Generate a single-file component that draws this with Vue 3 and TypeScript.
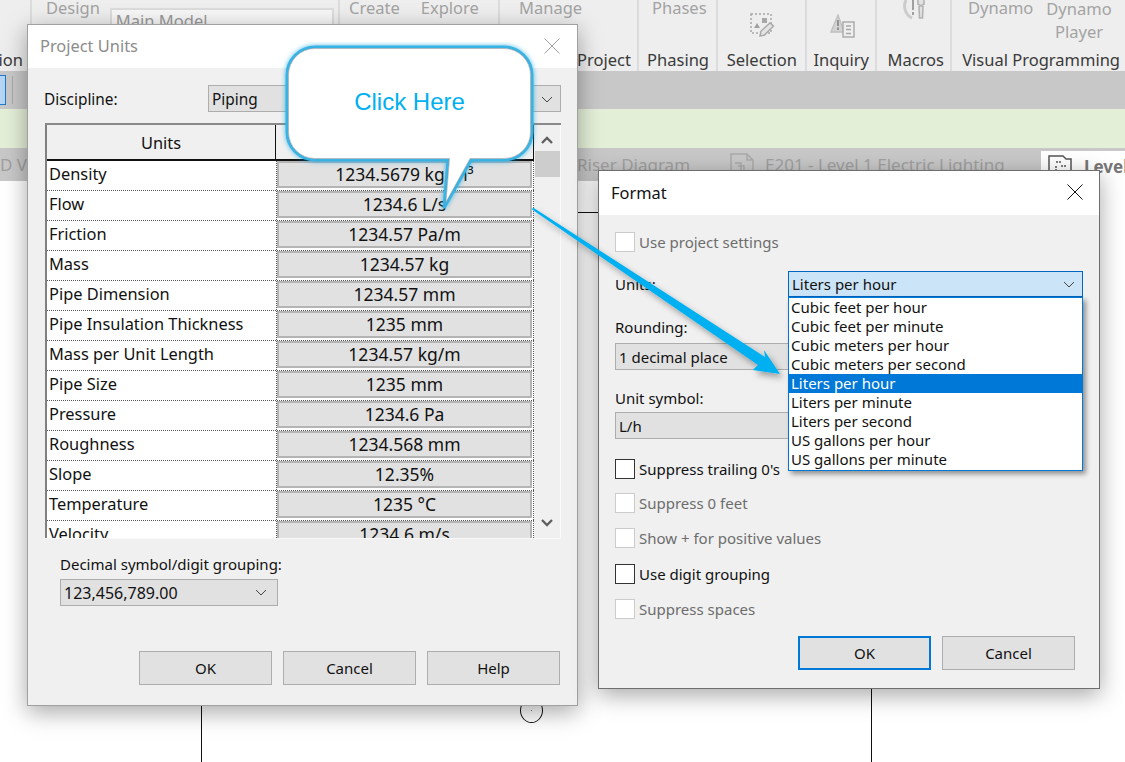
<script setup lang="ts">
interface UnitRow {
  name: string;
  value: string;
}

const unitRows: UnitRow[] = [
  { name: 'Density', value: '1234.5679 kg/m³' },
  { name: 'Flow', value: '1234.6 L/s' },
  { name: 'Friction', value: '1234.57 Pa/m' },
  { name: 'Mass', value: '1234.57 kg' },
  { name: 'Pipe Dimension', value: '1234.57 mm' },
  { name: 'Pipe Insulation Thickness', value: '1235 mm' },
  { name: 'Mass per Unit Length', value: '1234.57 kg/m' },
  { name: 'Pipe Size', value: '1235 mm' },
  { name: 'Pressure', value: '1234.6 Pa' },
  { name: 'Roughness', value: '1234.568 mm' },
  { name: 'Slope', value: '12.35%' },
  { name: 'Temperature', value: '1235 °C' },
  { name: 'Velocity', value: '1234.6 m/s' },
];

const flowUnits: string[] = [
  'Cubic feet per hour',
  'Cubic feet per minute',
  'Cubic meters per hour',
  'Cubic meters per second',
  'Liters per hour',
  'Liters per minute',
  'Liters per second',
  'US gallons per hour',
  'US gallons per minute',
];
const selectedUnit = 'Liters per hour';
</script>

<template>
  <div class="app">
    <!-- Revit ribbon behind the dialogs -->
    <div class="ribbon">
      <div class="group g0"><span class="group-label">ion</span></div>
      <div class="group g1">
        <div class="top-row">
          <span class="muted design">Design</span>
          <span class="model-select">Main Model</span>
        </div>
      </div>
      <div class="group g2">
        <div class="top-row">
          <span class="muted create">Create</span>
          <span class="muted explore">Explore</span>
        </div>
      </div>
      <div class="group g3">
        <div class="top-row"><span class="muted manage">Manage</span></div>
        <span class="group-label">Project</span>
      </div>
      <div class="group g4">
        <div class="top-row"><span class="muted">Phases</span></div>
        <span class="group-label">Phasing</span>
      </div>
      <div class="group g5">
        <svg class="ribbon-icon sel" viewBox="0 0 26 26" fill="none" stroke="#a8a8a8">
          <rect x="1" y="1" width="20" height="19" stroke-width="1.5" stroke-dasharray="2 2" />
          <path d="M4 15l3-5 3 5z" fill="#a0a0a0" stroke="none" />
          <rect x="12" y="5" width="5" height="5" fill="#a8a8a8" stroke="none" />
          <path d="M10 23l1-5 9-8 3.5 3-9 9z" fill="#e4e4e4" stroke-width="1.4" />
        </svg>
        <span class="group-label">Selection</span>
      </div>
      <div class="group g6">
        <svg class="ribbon-icon inq" viewBox="0 0 26 26" fill="none" stroke="#a8a8a8" stroke-width="1.4">
          <path d="M8 1L1 18h13z" fill="#d4d4d4" stroke="#c0c0c0" />
          <path d="M8 6v6M8 13.5v2.5" stroke="#8c8c8c" stroke-width="1.8" />
          <rect x="13" y="8" width="11" height="15" fill="#eeeeee" />
          <path d="M16 12h5M16 15.5h5M16 19.5h5" />
        </svg>
        <span class="group-label">Inquiry</span>
      </div>
      <div class="group g7">
        <svg class="ribbon-icon mac" viewBox="0 0 24 20" fill="none" stroke="#b4b4b4" stroke-width="1.6">
          <path d="M3 0C0 6 2 15 9 18" stroke="#cccccc" stroke-width="3" />
          <path d="M15 0v4l3 2 3-2V0M16 6l.5 12h3l.5-12" fill="#e2e2e2" />
          <path d="M10 0v10M10 12v3" stroke="#a0a0a0" stroke-width="2" />
        </svg>
        <span class="group-label">Macros</span>
      </div>
      <div class="group g8">
        <div class="top-row dynamo">
          <span class="muted">Dynamo</span>
          <span class="player muted">Dynamo<br />Player</span>
        </div>
        <span class="group-label">Visual Programming</span>
      </div>
    </div>

    <div class="toolbar">
      <span class="tool-active"></span>
      <span class="tool-sep"></span>
    </div>
    <div class="status-band"></div>

    <div class="tabs">
      <span class="tab-left">D V</span>
      <span class="tab-riser">Riser Diagram</span>
      <svg class="tab-icon" viewBox="0 0 24 24" fill="none" stroke="#aaaaaa" stroke-width="1.5">
        <path d="M1 23V1h16l6 6v16zM17 1v6h6" />
        <path d="M5 10h6v8h8M8 13h6v5" />
      </svg>
      <span class="tab-sheet">E201 - Level 1 Electric Lighting</span>
      <div class="tab-active">
        <svg class="tab-icon dark" viewBox="0 0 24 24" fill="none" stroke="#555555" stroke-width="1.5">
          <path d="M1 23V2h14l3 3h5v18z" />
          <path d="M8 8h5M8 12v6M13 12h5" stroke-dasharray="2 1" />
        </svg>
        <span class="tab-level">Level</span>
      </div>
    </div>

    <!-- drawing canvas: items sit at their own place on the sheet -->
    <span class="sheet-line line-a"></span>
    <span class="sheet-line line-b"></span>
    <span class="sheet-line line-c"></span>
    <span class="sheet-circle"><i class="sheet-dot"></i></span>

    <!-- Project Units dialog -->
    <section class="dialog units-dialog">
      <header class="title-bar">
        <span class="title muted-title">Project Units</span>
        <svg class="close" viewBox="0 0 16 16" stroke="#a0a0a0" fill="none"><path d="M.5.5l15 15M15.5.5l-15 15" /></svg>
      </header>
      <div class="units-body">
        <div class="discipline">
          <label class="discipline-label">Discipline:</label>
          <div class="select discipline-select">
            <span>Piping</span>
            <svg class="chevron" viewBox="0 0 12 7" fill="none" stroke="#444"><path d="M1 1l5 5 5-5" /></svg>
          </div>
        </div>

        <div class="table-wrap">
          <div class="table">
            <div class="thead">
              <div class="th th-units">Units</div>
              <div class="th th-format">Format</div>
            </div>
            <div v-for="row in unitRows" :key="row.name" class="tr">
              <div class="td-name">{{ row.name }}</div>
              <div class="td-value"><span class="value-box">{{ row.value }}</span></div>
            </div>
          </div>
          <div class="scrollbar">
            <svg class="scroll-arrow" viewBox="0 0 12 8" fill="none" stroke="#606060" stroke-width="2.4"><path d="M1 7l5-5 5 5" /></svg>
            <span class="scroll-thumb"></span>
            <svg class="scroll-arrow down" viewBox="0 0 12 8" fill="none" stroke="#606060" stroke-width="2.4"><path d="M1 1l5 5 5-5" /></svg>
          </div>
        </div>

        <div class="decimal">
          <label>Decimal symbol/digit grouping:</label>
          <div class="select decimal-select">
            <span>123,456,789.00</span>
            <svg class="chevron" viewBox="0 0 12 7" fill="none" stroke="#444"><path d="M1 1l5 5 5-5" /></svg>
          </div>
        </div>

        <div class="button-row">
          <button class="btn">OK</button>
          <button class="btn">Cancel</button>
          <button class="btn">Help</button>
        </div>
      </div>
    </section>

    <!-- Format dialog -->
    <section class="dialog format-dialog">
      <header class="title-bar format-title-bar">
        <span class="title">Format</span>
        <svg class="close" viewBox="0 0 16 16" stroke="#111" fill="none"><path d="M.5.5l15 15M15.5.5l-15 15" /></svg>
      </header>
      <div class="format-body">
        <div class="check off first"><span class="box"></span>Use project settings</div>

        <div class="units-row">
          <label>Units:</label>
          <div class="unit-combo">
            <span>Liters per hour</span>
            <svg class="chevron" viewBox="0 0 12 7" fill="none" stroke="#444"><path d="M1 1l5 5 5-5" /></svg>
            <ul class="unit-list">
              <li v-for="unit in flowUnits" :key="unit" :class="{ picked: unit === selectedUnit }">{{ unit }}</li>
            </ul>
          </div>
        </div>

        <label class="field-label rounding">Rounding:</label>
        <div class="select wide">1 decimal place</div>

        <label class="field-label symbol">Unit symbol:</label>
        <div class="select wide">L/h</div>

        <div class="check trailing"><span class="box"></span>Suppress trailing 0's</div>
        <div class="check off feet"><span class="box"></span>Suppress 0 feet</div>
        <div class="check off plus"><span class="box"></span>Show + for positive values</div>
        <div class="check grouping"><span class="box"></span>Use digit grouping</div>
        <div class="check off spaces"><span class="box"></span>Suppress spaces</div>

        <div class="button-row format-buttons">
          <button class="btn default">OK</button>
          <button class="btn">Cancel</button>
        </div>
      </div>
    </section>

    <!-- annotation drawn on top of the screenshot -->
    <svg class="arrow" viewBox="0 0 270 190" width="270" height="190">
      <defs>
        <filter id="arrow-shadow" x="-10%" y="-10%" width="125%" height="125%">
          <feDropShadow dx="3" dy="4" stdDeviation="3" flood-color="#000" flood-opacity="0.35" />
        </filter>
      </defs>
      <path
        d="M0 1.5 L232 151 L231 144 L247 168 L219.7 164 L225 159 L-1 3.5 Z"
        fill="#00b0f0"
        filter="url(#arrow-shadow)"
      />
    </svg>

    <div class="callout">
      <svg class="callout-shape" viewBox="0 0 260 176" width="260" height="176">
        <defs>
          <filter id="callout-glow" x="-10%" y="-10%" width="120%" height="120%">
            <feDropShadow dx="0" dy="0" stdDeviation="2.5" flood-color="#00a0e0" flood-opacity="0.7" />
          </filter>
        </defs>
        <path
          d="M35 5H224a28 28 0 0 1 28 28V90a28 28 0 0 1-28 28H191L164 166L168 118H35a28 28 0 0 1-28-28V33a28 28 0 0 1 28-28Z"
          fill="#fff"
          stroke="#38b3e3"
          stroke-width="3"
          filter="url(#callout-glow)"
        />
        <path
          d="M35 6.500H224a26.500 26.500 0 0 1 26.500 26.500V90a26.500 26.500 0 0 1-26.500 26.500H190L166 160L169.500 116.500H35a26.500 26.500 0 0 1-26.500-26.500V33a26.500 26.500 0 0 1 26.500-26.500Z"
          fill="#fff"
          stroke="#9a9a9a"
          stroke-width="0.6"
        />
      </svg>
      <span class="callout-text">Click Here</span>
    </div>
  </div>
</template>

<style>
html,
body {
  margin: 0;
  background: #fff;
}
</style>

<style scoped>
.app {
  position: relative;
  width: 1125px;
  height: 762px;
  overflow: hidden;
  background: #fff;
  font-family: "Noto Sans", "Open Sans", sans-serif;
  font-size: 15px;
  color: #111;
}

.ribbon {
  display: flex;
  height: 71px;
  background: #eeeeee;
  font-size: 16.5px;
  line-height: 16px;
  overflow: hidden;
}

.group {
  display: flex;
  flex-direction: column;
  justify-content: flex-end;
  align-items: flex-end;
  position: relative;
  box-sizing: border-box;
  height: 71px;
  border-right: 2px solid #dcdcdc;
  padding-bottom: 2px;
}

.top-row {
  position: absolute;
  top: 0;
  left: 0;
  right: 0;
  display: flex;
  white-space: nowrap;
}

.muted {
  color: #a3a3a3;
}

.group-label {
  color: #3a3a3a;
  line-height: 18px;
  white-space: nowrap;
}

.g0 { width: 32px; padding-right: 7px; }
.g1 { width: 308px; }
.g2 { width: 160px; }
.g3 { width: 139px; padding-right: 6px; }
.g4 { width: 79px; padding-right: 7px; }
.g5 { width: 89px; padding-right: 8px; }
.g6 { width: 70px; padding-right: 6px; }
.g7 { width: 75px; padding-right: 6px; }
.g8 { flex: 1; border-right: 0; padding-right: 5px; }

.design { margin-left: 14px; }
.model-select {
  flex: none;
  margin: 8px 0 0 10px;
  box-sizing: border-box;
  width: 224px;
  height: 24px;
  border: 2px solid #dcdcdc;
  background: #f7f7f7;
  padding: 3px 0 0 4px;
  color: #9a9a9a;
}
.create { margin-left: 9px; }
.explore { margin-left: 21px; }
.manage { margin-left: 19px; }
.g4 .top-row { padding-left: 13px; }
.dynamo { padding-left: 16px; gap: 13px; }
.player { text-align: center; line-height: 23px; margin-top: -3px; }

.ribbon-icon { position: absolute; }
.sel { left: 32px; top: 13px; width: 26px; height: 26px; }
.inq { left: 23px; top: 14px; width: 26px; height: 26px; }
.mac { left: 26px; top: 0; width: 24px; height: 20px; }

.toolbar {
  display: flex;
  align-items: center;
  height: 38px;
  background: #c8c8c8;
}
.tool-active {
  width: 5px;
  height: 28px;
  background: #b7d4f3;
  border: 1px solid #1f78d1;
  border-left: 0;
}
.tool-sep {
  width: 1px;
  height: 28px;
  margin-left: 6px;
  background: #aaaaaa;
}

.status-band {
  height: 39px;
  background: #e4efd8;
}

.tabs {
  position: relative;
  display: flex;
  align-items: center;
  height: 33px;
  background: #c8c8c8;
  color: #a0a0a0;
  font-size: 17px;
  white-space: nowrap;
  overflow: hidden;
}
.tab-left { width: 577px; flex: none; }
.tab-riser { width: 153px; flex: none; }
.tab-icon { width: 24px; height: 24px; flex: none; }
.tab-sheet { margin-left: 11px; width: 276px; flex: none; }
.tab-active {
  display: flex;
  align-items: center;
  gap: 12px;
  align-self: flex-end;
  height: 30px;
  padding-left: 7px;
  flex: 1;
  background: #fff;
}
.tab-level { font-weight: 700; color: #777; }

.sheet-line { position: absolute; background: #111; }
.line-a { left: 578px; top: 212px; width: 22px; height: 1px; }
.line-b { left: 201px; top: 700px; width: 1px; height: 62px; }
.line-c { left: 871px; top: 680px; width: 1px; height: 82px; }
.sheet-circle {
  position: absolute;
  left: 520px;
  top: 698px;
  width: 21px;
  height: 23px;
  border: 1px solid #111;
  border-radius: 50%;
}
.sheet-dot {
  position: absolute;
  left: 10px;
  top: 11px;
  width: 1px;
  height: 1px;
  background: #777;
}

.dialog {
  position: absolute;
  box-sizing: border-box;
  background: #f0f0f0;
  box-shadow: 0 6px 22px rgba(0, 0, 0, 0.35);
}
.units-dialog {
  left: 27px;
  top: 24px;
  width: 551px;
  height: 682px;
  border: 1px solid #a0a0a0;
}
.format-dialog {
  left: 598px;
  top: 170px;
  width: 502px;
  height: 519px;
  border: 1px solid #6e6e6e;
}

.title-bar {
  display: flex;
  align-items: center;
  justify-content: space-between;
  box-sizing: border-box;
  height: 43px;
  background: #fff;
  padding: 0 17px 2px 12px;
  font-size: 16.4px;
}
.format-title-bar { height: 44px; padding: 0 16px 2px 12px; }
.muted-title { color: #8c8c8c; }
.close { width: 16px; height: 16px; }

.units-body { padding: 17px 16px 0 16px; }
.discipline { display: flex; align-items: center; height: 27px; font-size: 15.4px; }
.discipline-label { width: 164px; padding-top: 2px; }

.select {
  display: flex;
  align-items: center;
  justify-content: space-between;
  box-sizing: border-box;
  height: 27px;
  background: #e1e1e1;
  border: 1px solid #adadad;
  padding: 0 7px 0 3px;
}
.discipline-select { width: 353px; padding-top: 2px; }
.chevron { width: 12px; height: 7px; }

.table-wrap {
  display: flex;
  box-sizing: border-box;
  width: 516px;
  height: 416px;
  margin: 11px 0 0 1px;
  background: #fff;
  border-top: 2px solid #8a8a8a;
  border-bottom: 1px solid #fafafa;
  overflow: hidden;
  font-size: 16.4px;
}
.table {
  box-sizing: border-box;
  width: 489px;
  flex: none;
  border-left: 2px solid #808080;
}
.thead {
  display: flex;
  height: 34px;
  background: #f0f0f0;
  border-bottom: 2px solid #111;
}
.th { display: flex; align-items: center; justify-content: center; }
.th-units { width: 228px; border-right: 1px solid #111; }
.th-format { flex: 1; border-right: 1px solid #111; }
.tr {
  display: flex;
  height: 30px;
  box-sizing: border-box;
  border-bottom: 1px dotted #555;
}
.td-name {
  box-sizing: border-box;
  width: 230px;
  flex: none;
  padding-left: 2px;
  border-right: 1px dotted #555;
  line-height: 25px;
  white-space: nowrap;
  background: #fff;
}
.td-value {
  flex: 1;
  padding-right: 1px;
  border-right: 1px dotted #555;
}
.value-box {
  display: block;
  box-sizing: border-box;
  height: 27px;
  background: #e1e1e1;
  border: 2px solid #b4b4b4;
  text-align: center;
  font-size: 17.5px;
  line-height: 22px;
}

.scrollbar {
  display: flex;
  flex-direction: column;
  align-items: center;
  position: relative;
  flex: 1;
  background: #f0f0f0;
  border-right: 1px solid #fafafa;
}
.scroll-arrow { width: 12px; height: 8px; margin-top: 11px; }
.scroll-arrow.down { position: absolute; bottom: 11px; }
.scroll-thumb {
  width: 25px;
  height: 26px;
  margin-top: 7px;
  background: #cdcdcd;
}

.decimal {
  display: flex;
  flex-direction: column;
  gap: 4px;
  margin: 14px 0 0 16px;
  line-height: 22px;
}
.decimal-select { width: 218px; padding-right: 10px; font-size: 16px; }

.button-row {
  display: flex;
  justify-content: flex-end;
  gap: 11px;
  margin: 45px 1px 0 0;
}
.btn {
  box-sizing: border-box;
  width: 133px;
  height: 34px;
  padding: 0;
  background: #e1e1e1;
  border: 1px solid #adadad;
  color: #111;
  font: inherit;
}
.btn.default { border: 2px solid #0078d7; }

.format-body { padding: 17px 16px 0 16px; }
.check {
  display: flex;
  align-items: center;
  height: 20px;
  gap: 4px;
}
.box {
  box-sizing: border-box;
  width: 20px;
  height: 20px;
  background: #fff;
  border: 1px solid #333;
}
.check.off { color: #6d6d6d; }
.check.off .box { border-color: #cccccc; }
.trailing { margin-top: 20px; }
.feet { margin-top: 14px; }
.plus { margin-top: 15px; }
.grouping { margin-top: 16px; }
.spaces { margin-top: 15px; }

.units-row {
  display: flex;
  align-items: center;
  margin-top: 19px;
  height: 26px;
}
.units-row label { width: 173px; }
.unit-combo {
  position: relative;
  z-index: 1;
  display: flex;
  align-items: center;
  justify-content: space-between;
  box-sizing: border-box;
  width: 295px;
  height: 26px;
  padding: 0 7px 0 3px;
  background: #cce4f7;
  border: 1px solid #0067c0;
}
.unit-list {
  position: absolute;
  left: -1px;
  top: 25px;
  width: 295px;
  box-sizing: border-box;
  margin: 0;
  padding: 0 0 1px;
  list-style: none;
  background: #fff;
  border: 1px solid #0078d7;
  box-shadow: 3px 3px 5px rgba(0, 0, 0, 0.4);
}
.unit-list li {
  height: 19px;
  line-height: 19px;
  padding-left: 2px;
  white-space: nowrap;
}
.unit-list li.picked {
  background: #0078d7;
  color: #fff;
}

.field-label { display: block; height: 20px; line-height: 20px; }
.rounding { margin-top: 20px; }
.symbol { margin-top: 18px; }
.wide { width: 468px; margin-top: 6px; }
.symbol + .wide { margin-top: 4px; }

.format-buttons { margin: 17px 8px 0 0; }

.arrow {
  position: absolute;
  left: 533px;
  top: 206px;
  overflow: visible;
}

.callout {
  position: absolute;
  left: 280px;
  top: 42px;
  width: 260px;
  height: 176px;
}
.callout-shape { display: block; }
.callout-text {
  position: absolute;
  left: 7px;
  top: 5px;
  width: 245px;
  text-align: center;
  line-height: 110px;
  font-family: "Liberation Sans", Arial, sans-serif;
  font-size: 24px;
  color: #00b0f0;
}
</style>
